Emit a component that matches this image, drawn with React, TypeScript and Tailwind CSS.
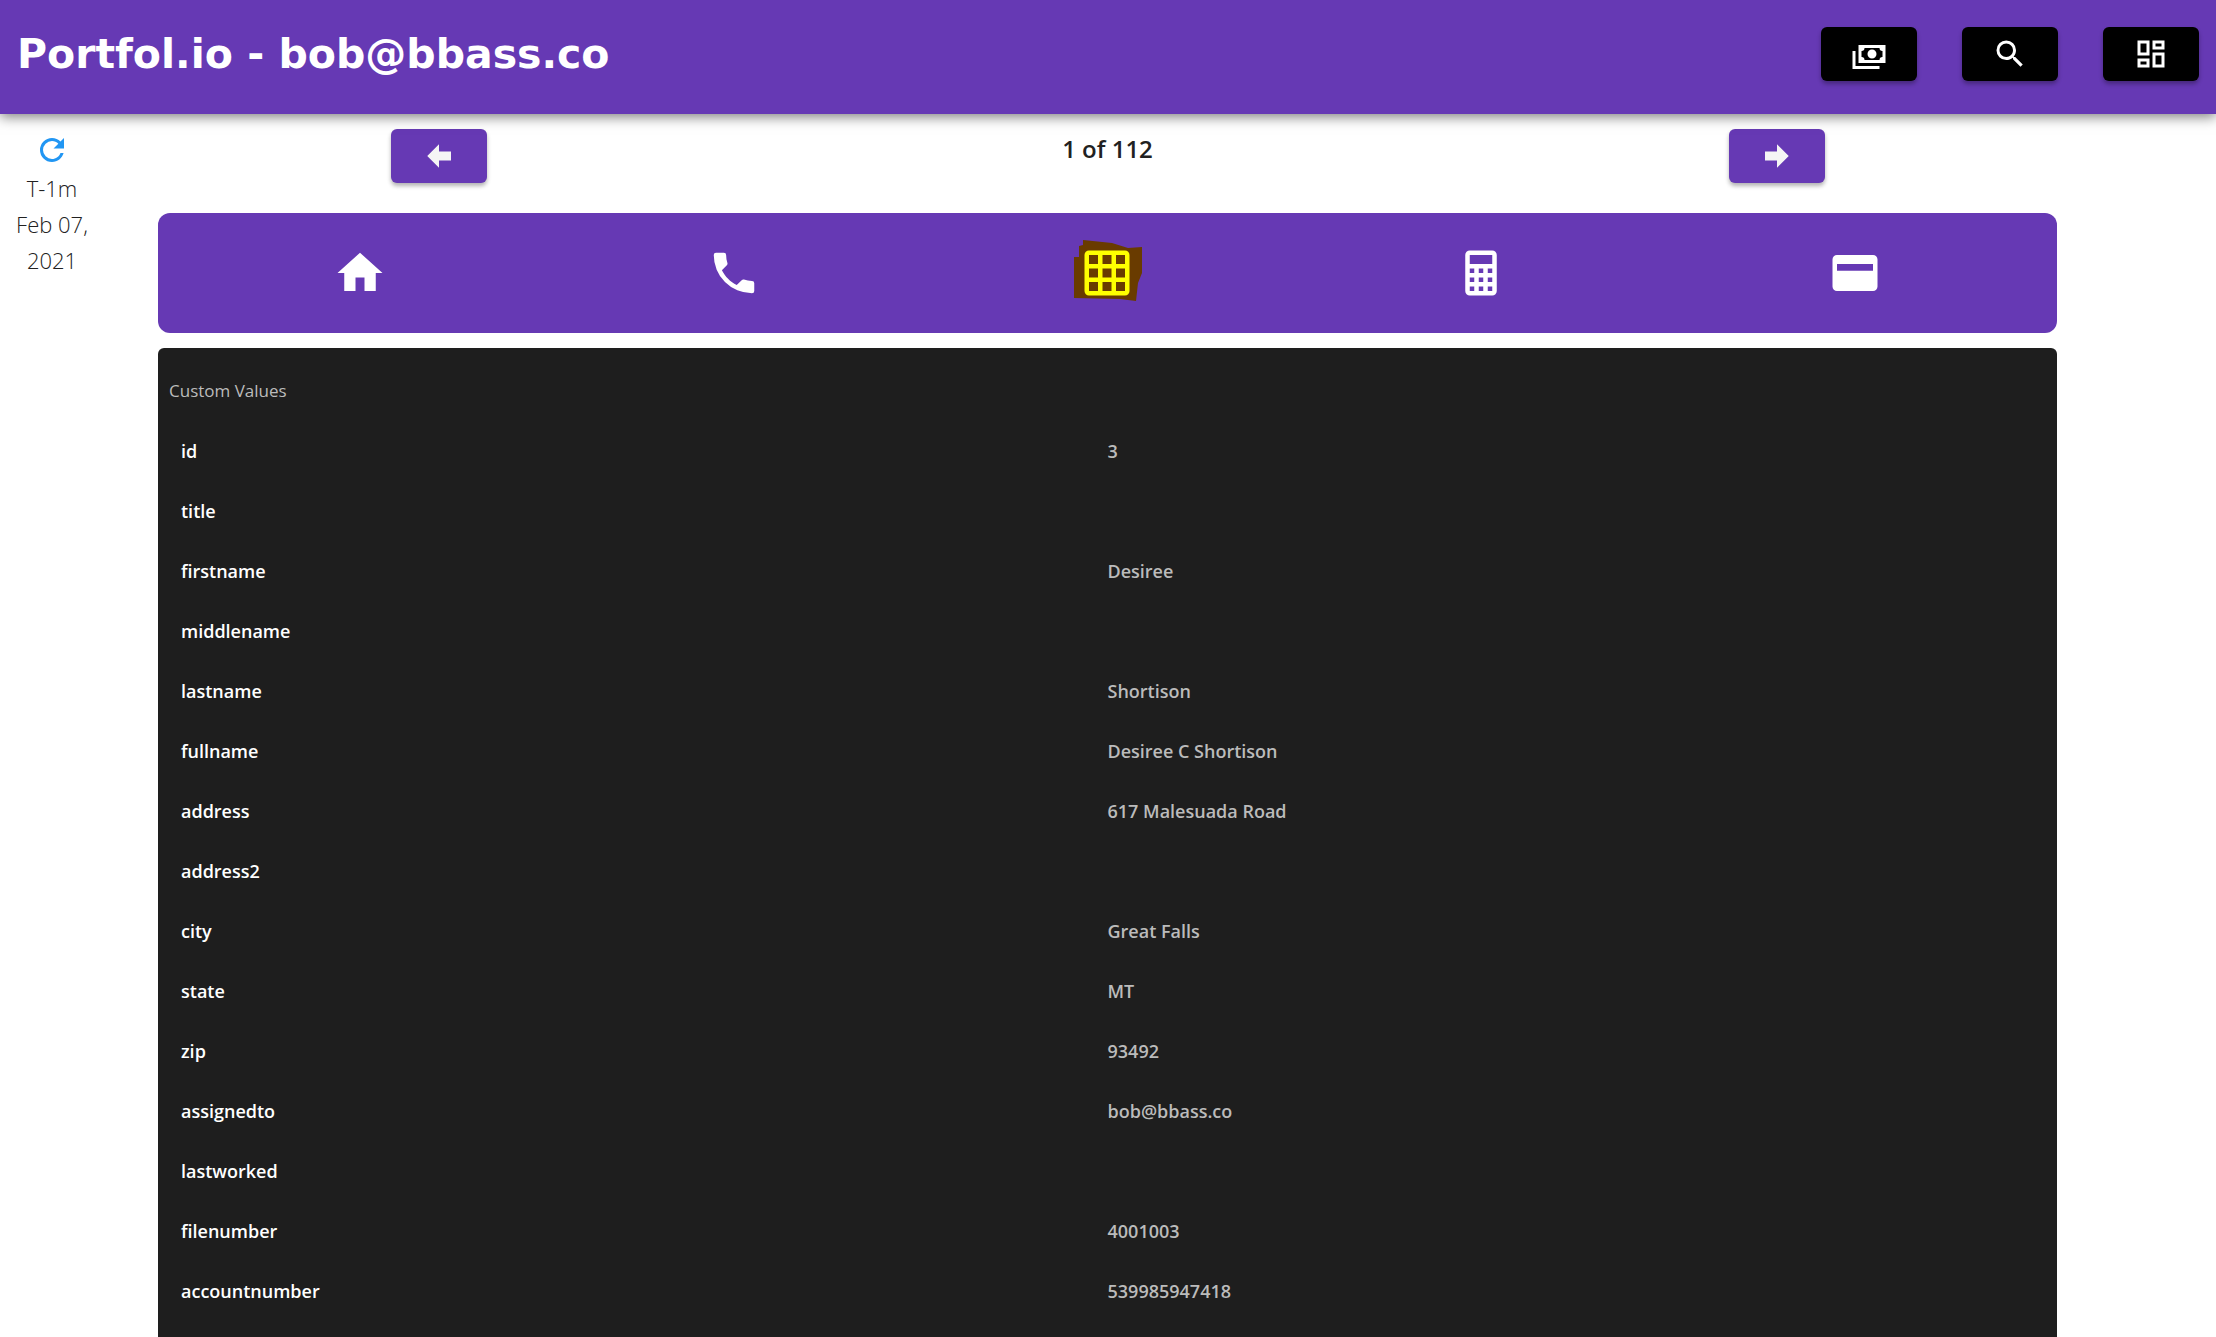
import type { ReactNode } from "react";

const icons = {
  cash: "M5,6H23V18H5V6M14,9A3,3 0 0,1 17,12A3,3 0 0,1 14,15A3,3 0 0,1 11,12A3,3 0 0,1 14,9M9,8A2,2 0 0,1 7,10V14A2,2 0 0,1 9,16H19A2,2 0 0,1 21,14V10A2,2 0 0,1 19,8H9M1,10H3V20H19V22H1V10Z",
  search:
    "M9.5,3A6.5,6.5 0 0,1 16,9.5C16,11.11 15.41,12.59 14.44,13.73L14.71,14H15.5L20.5,19L19,20.5L14,15.5V14.71L13.73,14.44C12.59,15.41 11.11,16 9.5,16A6.5,6.5 0 0,1 3,9.5A6.5,6.5 0 0,1 9.5,3M9.5,5C7,5 5,7 5,9.5C5,12 7,14 9.5,14C12,14 14,12 14,9.5C14,7 12,5 9.5,5Z",
  dashboard:
    "M19,5V7H15V5H19M9,5V11H5V5H9M19,13V19H15V13H19M9,17V19H5V17H9M21,3H13V9H21V3M11,3H3V13H11V3M21,11H13V21H21V11M11,15H3V21H11V15Z",
  left: "M20,9V15H12V19.84L4.16,12L12,4.16V9H20Z",
  right: "M4,15V9H12V4.16L19.84,12L12,19.84V15H4Z",
  refresh:
    "M17.65,6.35C16.2,4.9 14.21,4 12,4A8,8 0 0,0 4,12A8,8 0 0,0 12,20C15.73,20 18.84,17.45 19.73,14H17.65C16.83,16.33 14.61,18 12,18A6,6 0 0,1 6,12A6,6 0 0,1 12,6C13.66,6 15.14,6.69 16.22,7.78L13,11H20V4L17.65,6.35Z",
  home: "M10,20V14H14V20H19V12H22L12,3L2,12H5V20H10Z",
  phone:
    "M6.62,10.79C8.06,13.62 10.38,15.94 13.21,17.38L15.41,15.18C15.69,14.9 16.08,14.82 16.43,14.93C17.55,15.3 18.75,15.5 20,15.5A1,1 0 0,1 21,16.5V20A1,1 0 0,1 20,21A17,17 0 0,1 3,4A1,1 0 0,1 4,3H7.5A1,1 0 0,1 8.5,4C8.5,5.25 8.7,6.45 9.07,7.57C9.18,7.92 9.1,8.31 8.82,8.59L6.62,10.79Z",
  grid: "M10,4V8H14V4H10M16,4V8H20V4H16M16,10V14H20V10H16M16,16V20H20V16H16M14,20V16H10V20H14M8,20V16H4V20H8M8,14V10H4V14H8M8,8V4H4V8H8M10,14H14V10H10V14M4,2H20A2,2 0 0,1 22,4V20A2,2 0 0,1 20,22H4C2.92,22 2,21.1 2,20V4A2,2 0 0,1 4,2Z",
  calculator:
    "M7,2H17A2,2 0 0,1 19,4V20A2,2 0 0,1 17,22H7A2,2 0 0,1 5,20V4A2,2 0 0,1 7,2M7,4V8H17V4H7M7,10V12H9V10H7M11,10V12H13V10H11M15,10V12H17V10H15M7,14V16H9V14H7M11,14V16H13V14H11M15,14V16H17V14H15M7,18V20H9V18H7M11,18V20H13V18H11M15,18V20H17V18H15Z",
  card: "M4,4H20A2,2 0 0,1 22,6V18A2,2 0 0,1 20,20H4A2,2 0 0,1 2,18V6A2,2 0 0,1 4,4M4,8V11H20V8H4Z",
};

type IconName = keyof typeof icons;

function Icon({ name, className }: { name: IconName; className: string }) {
  return (
    <svg viewBox="0 0 24 24" aria-hidden="true" className={className}>
      <path d={icons[name]} fill="currentColor" fillRule="evenodd" />
    </svg>
  );
}

function ActionButton({ label, icon, color }: { label: string; icon: IconName; color: string }) {
  return (
    <button
      type="button"
      aria-label={label}
      className={`flex h-[54px] w-24 items-center justify-center rounded-md shadow-[0_3px_4px_rgba(0,0,0,0.3)] ${color}`}
    >
      <Icon name={icon} className="size-9" />
    </button>
  );
}

function Tab({ label, active, children }: { label: string; active?: boolean; children: ReactNode }) {
  return (
    <button
      type="button"
      role="tab"
      aria-label={label}
      aria-selected={!!active}
      className={`flex h-full flex-1 items-center justify-center ${active ? "text-[#ffff00]" : "text-white"}`}
    >
      {children}
    </button>
  );
}

const rows: [string, string][] = [
  ["id", "3"],
  ["title", ""],
  ["firstname", "Desiree"],
  ["middlename", ""],
  ["lastname", "Shortison"],
  ["fullname", "Desiree C Shortison"],
  ["address", "617 Malesuada Road"],
  ["address2", ""],
  ["city", "Great Falls"],
  ["state", "MT"],
  ["zip", "93492"],
  ["assignedto", "bob@bbass.co"],
  ["lastworked", ""],
  ["filenumber", "4001003"],
  ["accountnumber", "539985947418"],
];

export default function App() {
  return (
    <div className="flex min-h-screen flex-col bg-white font-['Open_Sans','Noto_Sans',sans-serif] text-[#212121]">
      <header className="relative flex items-center justify-between bg-[#6639b4] px-[17px] pt-[27px] pb-[33px] shadow-[0_3px_12px_rgba(0,0,0,0.5)]">
        <h1 className="font-['DejaVu_Sans',sans-serif] text-[41px] leading-[54px] font-bold whitespace-nowrap text-white">
          Portfol.io - bob@bbass.co
        </h1>
        <div className="flex gap-[45px]">
          <ActionButton label="Payments" icon="cash" color="bg-black text-white" />
          <ActionButton label="Search" icon="search" color="bg-black text-white" />
          <ActionButton label="Dashboard" icon="dashboard" color="bg-black text-white" />
        </div>
      </header>

      <div className="flex flex-1">
        <aside className="flex w-[104px] shrink-0 flex-col items-center px-3 pt-[18px] text-center text-[22px] leading-9 font-light">
          <button type="button" aria-label="Refresh" className="text-[#2196f3]">
            <Icon name="refresh" className="size-9" />
          </button>
          <div className="pt-0.5">
            <p>T-1m</p>
            <p>Feb 07, 2021</p>
          </div>
        </aside>

        <main className="flex min-w-0 flex-1 flex-col pt-[15px]">
          <div className="grid grid-cols-3 justify-items-center">
            <ActionButton label="Previous" icon="left" color="bg-[#6639b4] text-[#f5f5f5]" />
            <p className="text-2xl leading-10 font-semibold">1 of 112</p>
            <ActionButton label="Next" icon="right" color="bg-[#6639b4] text-[#f5f5f5]" />
          </div>

          <div role="tablist" className="mx-[54px] mt-[30px] flex h-[120px] rounded-xl bg-[#6639b4] px-[15px]">
            <Tab label="Home">
              <Icon name="home" className="size-[54px]" />
            </Tab>
            <Tab label="Phone">
              <Icon name="phone" className="size-[54px]" />
            </Tab>
            <Tab label="Custom values" active>
              <span className="relative">
                <svg viewBox="0 0 70 70" aria-hidden="true" className="absolute -inset-2 size-[70px]">
                  <path
                    d="M11 2L40 5L56 10L70 9V35L66 45L64 63L48 61L2 60V19H7V8L11 7Z"
                    fill="#693b00"
                  />
                </svg>
                <Icon name="grid" className="relative size-[54px]" />
              </span>
            </Tab>
            <Tab label="Calculator">
              <Icon name="calculator" className="size-[54px]" />
            </Tab>
            <Tab label="Card">
              <Icon name="card" className="size-[54px]" />
            </Tab>
          </div>

          <section className="mx-[54px] mt-[15px] flex-1 rounded-t-md bg-[#1e1e1e] pt-3">
            <h2 className="px-[11px] text-[17px] leading-[61px] text-[#bbbbbb]">Custom Values</h2>
            <table className="w-full table-fixed text-left text-lg leading-[60px] font-semibold">
              <tbody>
                {rows.map(([label, value]) => (
                  <tr key={label} className="h-[60px]">
                    <th scope="row" className="w-1/2 py-0 pl-[23px] font-semibold text-white">
                      {label}
                    </th>
                    <td className="w-1/2 p-0 text-[#bbbbbb]">{value}</td>
                  </tr>
                ))}
              </tbody>
            </table>
          </section>
        </main>

        <div className="w-[105px] shrink-0" />
      </div>
    </div>
  );
}
